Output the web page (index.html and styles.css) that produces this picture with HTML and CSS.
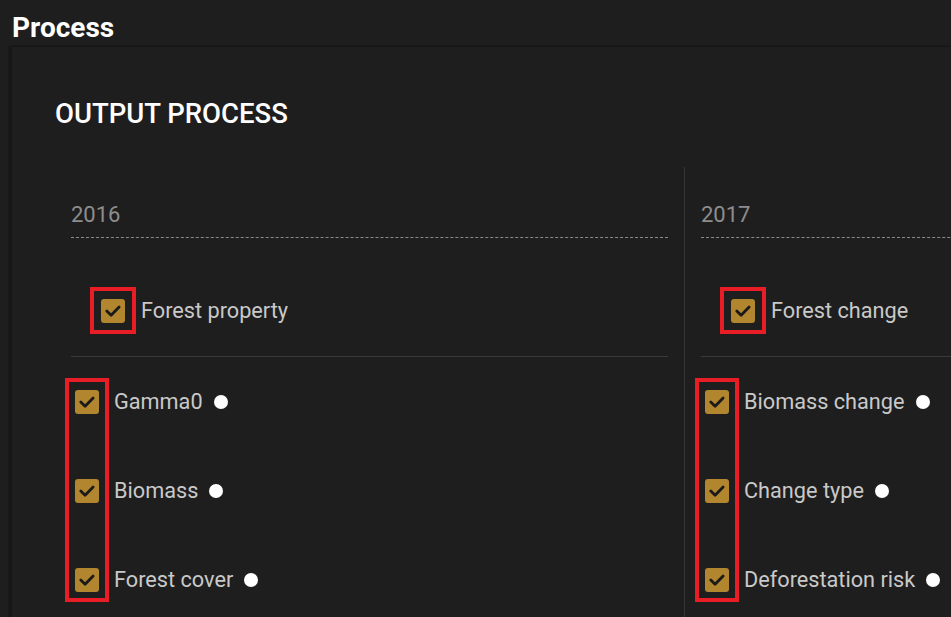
FILE: index.html
```html
<!DOCTYPE html>
<html>
<head>
<meta charset="utf-8">
<link rel="stylesheet" href="styles.css">
</head>
<body>
<h1 class="page-title">Process</h1>
<section class="panel">
  <h2 class="panel-title">OUTPUT PROCESS</h2>
  <div class="columns">
    <div class="col">
      <div class="year">2016</div>
      <div class="group">
        <span class="mark-wrap"><span class="check"><svg viewBox="0 0 24 24"><path d="M5.8 12l4.3 4.3 8-8.2"/></svg></span></span>
        <span class="group-label">Forest property</span>
      </div>
      <div class="items">
        <span class="mark-box"></span>
        <div class="item"><span class="check"><svg viewBox="0 0 24 24"><path d="M5.8 12l4.3 4.3 8-8.2"/></svg></span><span class="item-label">Gamma0</span><span class="dot"></span></div>
        <div class="item"><span class="check"><svg viewBox="0 0 24 24"><path d="M5.8 12l4.3 4.3 8-8.2"/></svg></span><span class="item-label">Biomass</span><span class="dot"></span></div>
        <div class="item"><span class="check"><svg viewBox="0 0 24 24"><path d="M5.8 12l4.3 4.3 8-8.2"/></svg></span><span class="item-label">Forest cover</span><span class="dot"></span></div>
      </div>
    </div>
    <div class="col col-2">
      <div class="year">2017</div>
      <div class="group">
        <span class="mark-wrap"><span class="check"><svg viewBox="0 0 24 24"><path d="M5.8 12l4.3 4.3 8-8.2"/></svg></span></span>
        <span class="group-label">Forest change</span>
      </div>
      <div class="items">
        <span class="mark-box"></span>
        <div class="item"><span class="check"><svg viewBox="0 0 24 24"><path d="M5.8 12l4.3 4.3 8-8.2"/></svg></span><span class="item-label">Biomass change</span><span class="dot"></span></div>
        <div class="item"><span class="check"><svg viewBox="0 0 24 24"><path d="M5.8 12l4.3 4.3 8-8.2"/></svg></span><span class="item-label">Change type</span><span class="dot"></span></div>
        <div class="item"><span class="check"><svg viewBox="0 0 24 24"><path d="M5.8 12l4.3 4.3 8-8.2"/></svg></span><span class="item-label">Deforestation risk</span><span class="dot"></span></div>
      </div>
    </div>
  </div>
</section>
</body>
</html>
```
FILE: styles.css
```css
html, body {
  margin: 0;
  padding: 0;
  background: #1e1e1e;
  height: 100%;
  overflow: hidden;
}
body {
  font-family: Roboto, "Liberation Sans", sans-serif;
  color: #c9c9c9;
}
.page-title {
  margin: 0;
  padding: 12px 0 0 12px;
  height: 35px;
  font-size: 28px;
  font-weight: 700;
  line-height: 32px;
  color: #ffffff;
  box-sizing: content-box;
}
.panel {
  margin-left: 10px;
  border-left: 2px solid #171717;
  box-shadow: -1px -1px 2px rgba(0,0,0,0.35);
  background: #1e1e1e;
  padding: 49px 0 0 43px;
  height: 700px;
}
.panel-title {
  margin: 0;
  font-size: 27.5px;
  font-weight: 500;
  line-height: 36px;
  color: #ffffff;
}
.columns {
  display: flex;
  margin-top: 35px;
  padding-left: 16px;
  white-space: nowrap;
  overflow: hidden;
}
.col {
  width: 597px;
  flex: none;
  padding-top: 35px;
}
.col-2 {
  margin-left: 16px;
  border-left: 1px solid #363636;
  padding-left: 16px;
  width: 400px;
}
.year {
  font-size: 22px;
  line-height: 26px;
  color: #8d8d8d;
  padding-bottom: 9px;
  border-bottom: 1px dashed #8a8a8a;
}
.group {
  display: flex;
  align-items: center;
  height: 119px;
  padding-left: 19px;
  border-bottom: 1px solid #3a3a3a;
  box-sizing: border-box;
  padding-top: 27px;
}
.mark-wrap {
  display: flex;
  align-items: center;
  justify-content: center;
  width: 38px;
  height: 39px;
  border: 4px solid #e81d25;
}
.group-label {
  margin-left: 5px;
  font-size: 21.7px;
  color: #c9c9c9;
}
.check {
  display: inline-flex;
  width: 24px;
  height: 24px;
  background: #b2852f;
  border-radius: 3px;
  flex: none;
}
.check svg {
  width: 24px;
  height: 24px;
  fill: none;
  stroke: #1a1a1a;
  stroke-width: 2.8;
  stroke-linecap: round;
  stroke-linejoin: round;
}
.items {
  position: relative;
  padding: 0 0 0 4px;
}
.mark-box {
  position: absolute;
  left: -6px;
  top: 21px;
  width: 36px;
  height: 216px;
  border: 4px solid #e81d25;
}
.item {
  display: flex;
  align-items: center;
  height: 89px;
}
.item-label {
  margin-left: 15px;
  font-size: 21.7px;
  color: #c9c9c9;
}
.dot {
  width: 14px;
  height: 14px;
  border-radius: 50%;
  background: #ffffff;
  margin-left: 11px;
}
```
